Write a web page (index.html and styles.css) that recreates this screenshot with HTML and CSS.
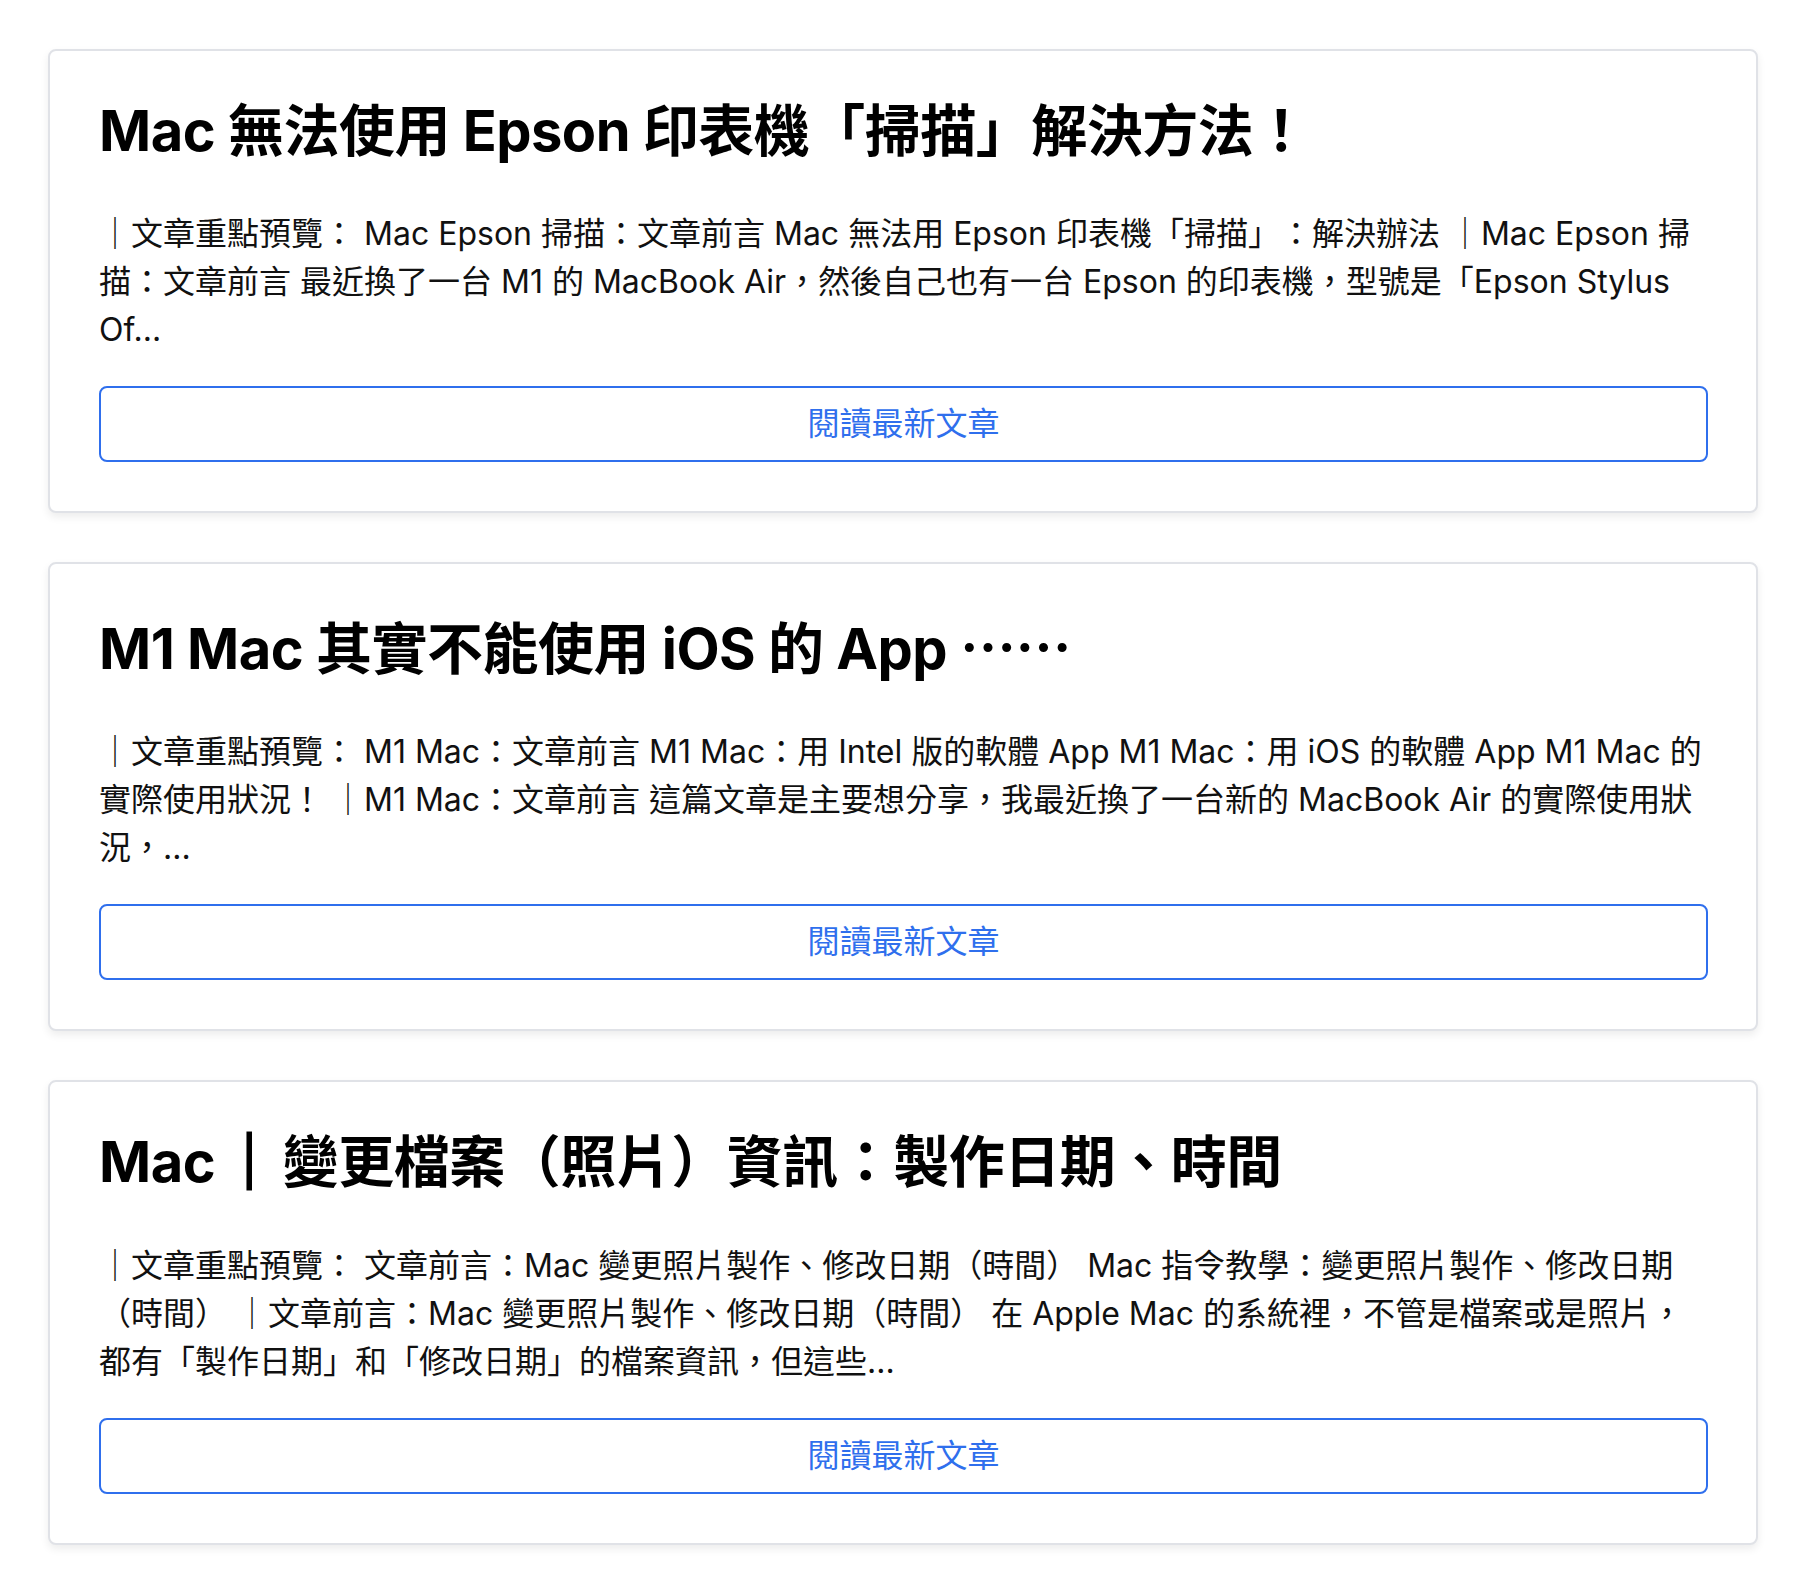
FILE: index.html
```html
<!DOCTYPE html>
<html lang="zh-Hant">
<head>
<meta charset="utf-8">
<title>最新文章</title>
<link rel="stylesheet" href="styles.css">
</head>
<body>
<main class="list">
  <article class="card">
    <h2 class="card-title">Mac 無法使用 Epson 印表機「掃描」解決方法！</h2>
    <p class="card-text">｜文章重點預覽： Mac Epson 掃描：文章前言 Mac 無法用 Epson 印表機「掃描」：解決辦法 ｜Mac Epson 掃描：文章前言 最近換了一台 M1 的 MacBook Air，然後自己也有一台 Epson 的印表機，型號是「Epson Stylus Of...</p>
    <a class="btn" href="#">閱讀最新文章</a>
  </article>
  <article class="card">
    <h2 class="card-title">M1 Mac 其實不能使用 iOS 的 App <span class="cjk">……</span></h2>
    <p class="card-text">｜文章重點預覽： M1 Mac：文章前言 M1 Mac：用 Intel 版的軟體 App M1 Mac：用 iOS 的軟體 App M1 Mac 的實際使用狀況！ ｜M1 Mac：文章前言 這篇文章是主要想分享，我最近換了一台新的 MacBook Air 的實際使用狀況，...</p>
    <a class="btn" href="#">閱讀最新文章</a>
  </article>
  <article class="card">
    <h2 class="card-title">Mac<span class="bar">｜</span>變更檔案（照片）資訊：製作日期、時間</h2>
    <p class="card-text">｜文章重點預覽： 文章前言：Mac 變更照片製作、修改日期（時間） Mac 指令教學：變更照片製作、修改日期（時間） ｜文章前言：Mac 變更照片製作、修改日期（時間） 在 Apple Mac 的系統裡，不管是檔案或是照片，都有「製作日期」和「修改日期」的檔案資訊，但這些...</p>
    <a class="btn" href="#">閱讀最新文章</a>
  </article>
</main>
</body>
</html>
```

FILE: styles.css
```css
html, body {
  margin: 0;
  padding: 0;
  background: #ffffff;
}

body {
  font-family: Inter, "Noto Sans CJK TC", sans-serif;
  color: #111;
  text-spacing-trim: space-all;
}

.list {
  display: flex;
  flex-direction: column;
  gap: 49px;
  padding: 49px 50px 50px 48px;
}

.card {
  display: flex;
  flex-direction: column;
  border: 2px solid #e0e2e7;
  border-radius: 8px;
  padding: 47px 48px 49px 49px;
  box-shadow: 0 4px 8px rgba(0, 0, 0, 0.075);
  background: #fff;
}

.card-title {
  margin: 0 0 45px 0;
  font-size: 56px;
  line-height: 1.2;
  font-weight: 700;
  letter-spacing: -0.5px;
  color: #000;
}

.cjk {
  font-family: "Noto Sans CJK TC", sans-serif;
}

.bar {
  -webkit-text-stroke: 3px #000;
  padding: 0 6px;
}

.card-text {
  margin: 0 0 32px 0;
  font-size: 32px;
  line-height: 1.5;
  color: #111;
}

.btn {
  display: block;
  text-align: center;
  text-decoration: none;
  color: #2f6fed;
  font-size: 32px;
  line-height: 48px;
  padding: 12px 24px;
  border: 2px solid #2f6fed;
  border-radius: 8px;
}
```
